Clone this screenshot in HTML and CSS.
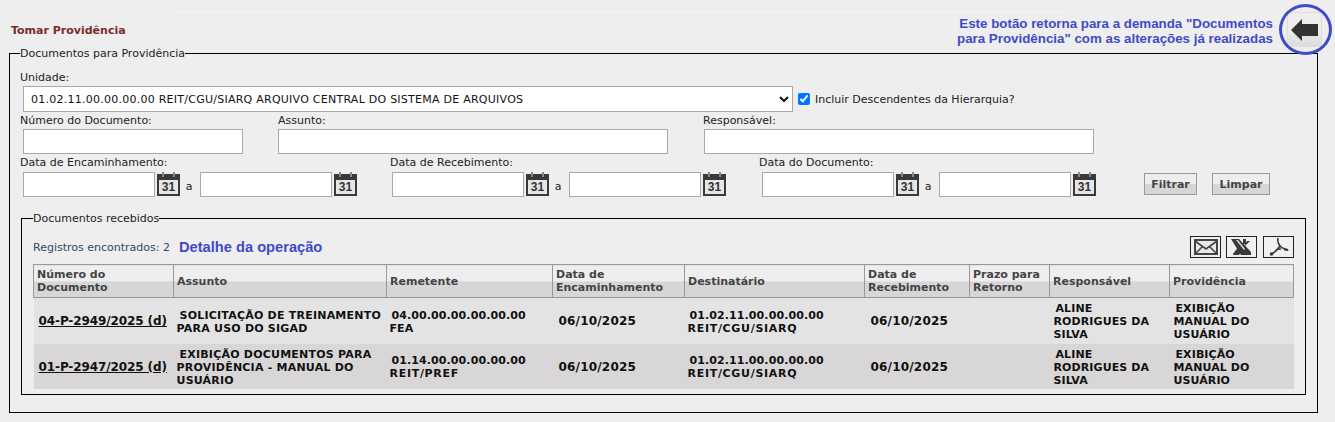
FILE: index.html
```html
<!DOCTYPE html>
<html lang="pt-BR">
<head>
<meta charset="utf-8">
<title>Tomar Providência</title>
<link rel="stylesheet" href="styles.css">
</head>
<body>
<header class="top">
  <h1 class="title">Tomar Providência</h1>
  <p class="note">Este botão retorna para a demanda "Documentos<br>para Providência" com as alterações já realizadas</p>
  <button class="back" type="button" aria-label="Voltar">
    <svg width="27" height="22" viewBox="0 0 27 22"><path fill="#333" d="M0 11 11 0v5h16v12H11v5z"/></svg>
  </button>
  <span class="ring"></span>
</header>
<fieldset class="outer">
  <legend>Documentos para Providência</legend>
  <div class="label l-unit">Unidade:</div>
  <div class="unit-row">
    <select class="unit"><option>01.02.11.00.00.00.00 REIT/CGU/SIARQ ARQUIVO CENTRAL DO SISTEMA DE ARQUIVOS</option></select>
    <input class="check" type="checkbox" checked>
    <span class="label">Incluir Descendentes da Hierarquia?</span>
  </div>
  <div class="text-row">
    <div class="f f1"><div class="label">Número do Documento:</div><input class="in w220"></div>
    <div class="f f2"><div class="label">Assunto:</div><input class="in w390"></div>
    <div class="f f3"><div class="label">Responsável:</div><input class="in w390"></div>
  </div>
  <div class="date-row">
    <div class="d d1"><div class="label">Data de Encaminhamento:</div>
      <div class="dates"><input class="in w132"><span class="cal"><b>31</b></span><span class="a">a</span><input class="in w132"><span class="cal"><b>31</b></span></div></div>
    <div class="d d2"><div class="label">Data de Recebimento:</div>
      <div class="dates"><input class="in w132"><span class="cal"><b>31</b></span><span class="a">a</span><input class="in w132"><span class="cal"><b>31</b></span></div></div>
    <div class="d d3"><div class="label">Data do Documento:</div>
      <div class="dates"><input class="in w132"><span class="cal"><b>31</b></span><span class="a">a</span><input class="in w132"><span class="cal"><b>31</b></span></div></div>
    <div class="actions"><button class="btn b1" type="button">Filtrar</button><button class="btn b2" type="button">Limpar</button></div>
  </div>
  <fieldset class="inner">
    <legend>Documentos recebidos</legend>
    <div class="bar">
      <span class="count">Registros encontrados: 2</span>
      <span class="detail">Detalhe da operação</span>
      <div class="tools">
        <button class="tool" type="button" aria-label="E-mail"><svg width="24" height="16" viewBox="0 0 24 16"><path fill="#e8e8e8" stroke="#444" stroke-width="2" d="M1 1h22v14H1z"/><path fill="none" stroke="#444" stroke-width="1.600" d="m1 2 11 8 11-8M1 15l8-8M23 15l-8-8"/></svg></button>
        <button class="tool" type="button" aria-label="Excel"><svg width="25" height="18" viewBox="0 0 25 18"><path fill="#3a3a3a" d="M2 1h8l12 13v3H12zM4 16l6-8 3 4-3 5H4z"/><path fill="#ddd" d="M7 2h2l7 9-1 1z"/><path fill="#3a3a3a" d="M14 1h3v5h-3zM18 3h3L15 9z"/></svg></button>
        <button class="tool" type="button" aria-label="PDF"><svg width="22" height="20" viewBox="0 0 22 20"><path fill="none" stroke="#3a3a3a" stroke-width="1.700" d="M10 1c-1 3 1 7 3 9 2 2 5 2 7 3M12 9c-2 3-3 5-8 8M13 12c-2 0-4 0-5 1"/><circle cx="3.500" cy="17" r="1.800" fill="#3a3a3a"/><path fill="none" stroke="#3a3a3a" stroke-width="1.200" d="M16 13c2 0 4 0 4 1"/></svg></button>
      </div>
    </div>
    <table class="grid">
      <colgroup><col class="k1"><col class="k2"><col class="k3"><col class="k4"><col class="k5"><col class="k6"><col class="k7"><col class="k8"><col class="k9"></colgroup>
      <thead>
        <tr><th>Número do Documento</th><th>Assunto</th><th>Remetente</th><th>Data de Encaminhamento</th><th>Destinatário</th><th>Data de Recebimento</th><th>Prazo para Retorno</th><th>Responsável</th><th>Providência</th></tr>
      </thead>
      <tbody>
        <tr class="r1">
          <td class="num"><a href="#">04-P-2949/2025 (d)</a></td>
          <td class="p3">SOLICITAÇÃO DE TREINAMENTO PARA USO DO SIGAD</td>
          <td class="rem">04.00.00.00.00.00.00 FEA</td>
          <td class="date">06/10/2025</td>
          <td class="dest">01.02.11.00.00.00.00 <span class="path">REIT/CGU/SIARQ</span></td>
          <td class="date">06/10/2025</td>
          <td></td>
          <td>ALINE RODRIGUES DA SILVA</td>
          <td>EXIBIÇÃO MANUAL DO USUÁRIO</td>
        </tr>
        <tr class="r2">
          <td class="num"><a href="#">01-P-2947/2025 (d)</a></td>
          <td class="p3">EXIBIÇÃO DOCUMENTOS PARA PROVIDÊNCIA - MANUAL DO USUÁRIO</td>
          <td class="rem">01.14.00.00.00.00.00 <span class="path">REIT/PREF</span></td>
          <td class="date">06/10/2025</td>
          <td class="dest">01.02.11.00.00.00.00 <span class="path">REIT/CGU/SIARQ</span></td>
          <td class="date">06/10/2025</td>
          <td></td>
          <td>ALINE RODRIGUES DA SILVA</td>
          <td>EXIBIÇÃO MANUAL DO USUÁRIO</td>
        </tr>
      </tbody>
    </table>
  </fieldset>
</fieldset>
</body>
</html>
```
FILE: styles.css
```css
html, body { margin: 0; padding: 0; }
body {
  width: 1335px; height: 422px; overflow: hidden;
  background: #eeeeee; color: #222;
  font: 11px/13px "DejaVu Sans", Verdana, sans-serif;
  box-sizing: border-box; padding: 0 17px 0 9px;
}

.top { position: relative; height: 47px; display: flex; align-items: flex-start; }
.top::before {
  content: ""; position: absolute; left: 161px; top: 11px; width: 900px; height: 1px; background: #f4f4f4;
}
.title { margin: 24px 0 0 2px; font: bold 11px/14px "DejaVu Sans", sans-serif; color: #7b2b2b; }
.note {
  margin: 16px 0 0 auto; text-align: right;
  font: bold 13.33px/15px "Liberation Sans", sans-serif; color: #3f4bc6;
}
.back {
  margin: 12px -4px 0 14px; width: 35px; height: 35px; padding: 0; flex: none;
  display: flex; align-items: center; justify-content: center;
  border: 1px solid #ddd; background: linear-gradient(#eee 50%, #dcdcdc);
}
.ring {
  position: absolute; left: 1270px; top: 4px; width: 47px; height: 45px;
  border: 3px solid #3f4bc6; border-radius: 50%;
}

fieldset { margin: 0; min-width: 0; border: 1px solid #000; }
legend { padding: 0; }
.outer { height: 366px; box-sizing: border-box; padding: 0 11px 0 10px; }
.label { color: #222; white-space: nowrap; }
.l-unit { margin-top: 11px; }
.unit-row { display: flex; align-items: center; height: 26px; margin-top: 2px; }
.unit {
  margin-left: 3px; width: 770px; height: 26px; padding: 0 0 0 3px; box-sizing: border-box;
  border: 1px solid #a9a9a9; border-radius: 0; background: #fff; color: #111;
  font: 11px "DejaVu Sans", sans-serif; letter-spacing: .25px;
}
.check { margin: 0 5px 0 5px; width: 12px; height: 12px; accent-color: #0075ff; }
.text-row { display: flex; margin-top: 2px; }
.f1 { width: 258px; }
.f2 { width: 425px; }
.in {
  display: block; margin: 2px 0 0 3px; height: 25px; box-sizing: border-box;
  border: 1px solid #a9a9a9; background: #fff; padding: 0;
}
.f2 .in { margin-left: 0; }
.f3 .in { margin-left: 1px; }
.w220 { width: 220px; }
.w390 { width: 390px; }
.w132 { width: 132px; }
.date-row { display: flex; margin-top: 2px; }
.d { flex: none; }
.d1 { width: 370px; }
.d2 { width: 369px; }
.d3 { width: 385px; }
.dates { display: flex; align-items: flex-start; margin-top: 3px; }
.dates .in { margin: 0 0 0 3px; }
.d2 .in:first-child { margin-left: 2px; }
.dates .a + .in { margin-left: 2px; }
.cal {
  position: relative; flex: none; box-sizing: border-box; width: 23px; height: 22px; margin: 2px 0 0 2px;
  background: #e6e6e6; border: 2px solid #3a3a3a; border-top-width: 6px; border-bottom-width: 2px;
  display: flex; align-items: center; justify-content: center;
}
.cal::before {
  content: ""; position: absolute; left: 3px; right: 3px; top: -8px; height: 5px;
  border-left: 2px solid #888; border-right: 2px solid #888;
}
.cal b { font: bold 12px/12px "Liberation Sans", sans-serif; color: #333; }
.a { width: 18px; margin-top: 8px; text-align: center; }
.actions { display: flex; gap: 15px; align-items: flex-start; margin-top: 17px; }
.btn {
  height: 22px; padding: 0; border: 1px solid #999;
  background: linear-gradient(#eee 50%, #d6d6d6 50%);
  font: bold 11px "DejaVu Sans", sans-serif; color: #444;
}
.b1 { width: 53px; }
.b2 { width: 58px; }

.inner { margin: 15px 0 0 1px; height: 183px; box-sizing: border-box; padding: 0 11px; }
.bar { display: flex; align-items: center; height: 24px; margin-top: 10px; }
.count { color: #2d4a66; }
.detail { margin-left: 9px; font: bold 14.67px "Liberation Sans", sans-serif; color: #3f4bc6; }
.tools { margin-left: auto; display: flex; gap: 5px; }
.tool {
  width: 31px; height: 22px; padding: 0; display: flex; align-items: center; justify-content: center;
  background: #f0f0f0; border: 1px solid #222;
}
.tool:last-child { margin-left: 1px; }
.grid {
  width: 1260px; table-layout: fixed; border-collapse: collapse; margin-top: 5px;
  font: bold 11px/13px "DejaVu Sans", sans-serif; color: #111;
}
.k1 { width: 140px; } .k2 { width: 213px; } .k3 { width: 166px; }
.k4 { width: 132px; } .k5 { width: 180px; } .k6 { width: 105px; }
.k7 { width: 80px; } .k8 { width: 120px; } .k9 { width: 124px; }
th {
  height: 32px; padding: 0 3px; text-align: left; color: #444;
  border: 1px solid #999;
  background: linear-gradient(#eeeeee 50%, #d6d6d6 50%);
  font-weight: bold;
}
td { padding: 2px 4px 0; text-indent: 2px; letter-spacing: .1px; }
td.p3 { padding-left: 3px; text-indent: 3px; letter-spacing: .22px; }
td.rem { padding-left: 3px; }
td.dest { padding-left: 3px; }
.r1 td { height: 46px; box-sizing: border-box; background: #e3e3e3; }
.r2 td { height: 45px; box-sizing: border-box; background: #d8d6d6; }
.num a { color: #111; }
td.num { padding-left: 5px; text-indent: 0; font-size: 12px; letter-spacing: -.1px; white-space: nowrap; }
td.date { padding-left: 4px; text-indent: 2px; font-size: 12px; letter-spacing: .2px; }
.path { letter-spacing: .7px; }
```
